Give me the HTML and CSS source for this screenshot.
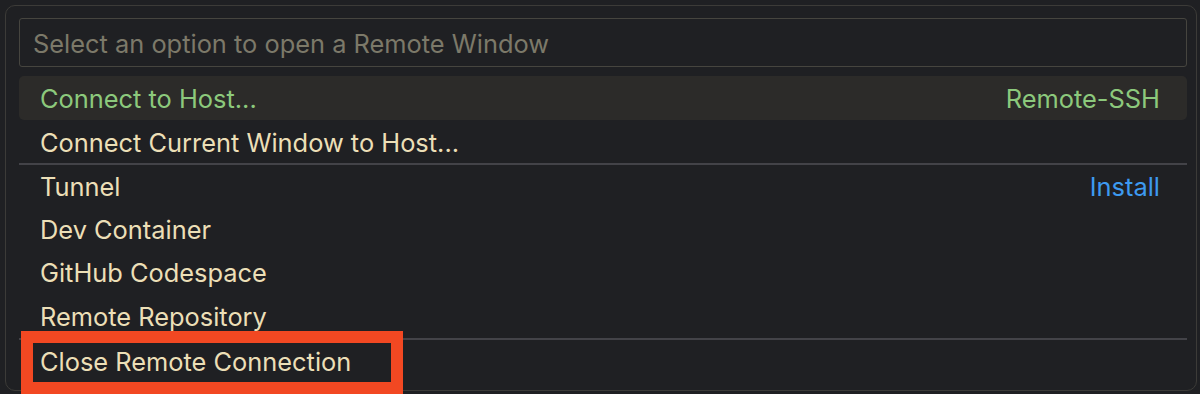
FILE: index.html
```html
<!DOCTYPE html>
<html>
<head>
<meta charset="utf-8">
<link rel="stylesheet" href="styles.css">
</head>
<body>
<div class="panel">
  <div class="input"><span class="placeholder">Select an option to open a Remote Window</span></div>
  <div class="list">
    <div class="row active"><span class="label green">Connect to Host...</span><span class="desc green">Remote-SSH</span></div>
    <div class="row"><span class="label">Connect Current Window to Host...</span></div>
    <div class="row sep"><span class="label">Tunnel</span><span class="desc blue">Install</span></div>
    <div class="row"><span class="label">Dev Container</span></div>
    <div class="row"><span class="label">GitHub Codespace</span></div>
    <div class="row"><span class="label">Remote Repository</span></div>
    <div class="row sep"><span class="label">Close Remote Connection</span></div>
  </div>
</div>
<div class="callout"></div>
</body>
</html>
```
FILE: styles.css
```css
html, body {
  margin: 0;
  padding: 0;
  background: #1f2023;
  width: 1200px;
  height: 394px;
  overflow: hidden;
  font-family: Inter, "Noto Sans", "Liberation Sans", sans-serif;
}
.panel {
  margin: 5px 3px 0 5px;
  height: 386px;
  box-sizing: border-box;
  border: 1px solid #3c3b38;
  border-radius: 10px;
  background: #1f2023;
  padding: 12px 9px 0 13px;
}
.input {
  height: 49px;
  box-sizing: border-box;
  border: 1px solid #46453f;
  border-radius: 3px;
  display: flex;
  align-items: center;
  padding-left: 13px;
}
.placeholder {
  color: #7c7969;
  font-size: 25.4px;
  line-height: 1;
  padding-top: 2px;
}
.list {
  margin-top: 9px;
  display: flex;
  flex-direction: column;
}
.row {
  height: 43.6px;
  box-sizing: border-box;
  display: flex;
  align-items: center;
  justify-content: space-between;
  padding: 2px 27px 0 21px;
  font-size: 25.4px;
  line-height: 1;
  color: #ecdfb7;
  border-radius: 5px;
}
.row.active {
  background: #2c2b29;
}
.row.sep {
  border-top: 2px solid #434348;
  border-radius: 0;
}
.green { color: #8cc97c; }
.blue { color: #3d9af0; }
.callout {
  position: absolute;
  left: 21px;
  top: 331px;
  width: 382px;
  height: 63px;
  box-sizing: border-box;
  border: 12px solid #f24822;
}
```
